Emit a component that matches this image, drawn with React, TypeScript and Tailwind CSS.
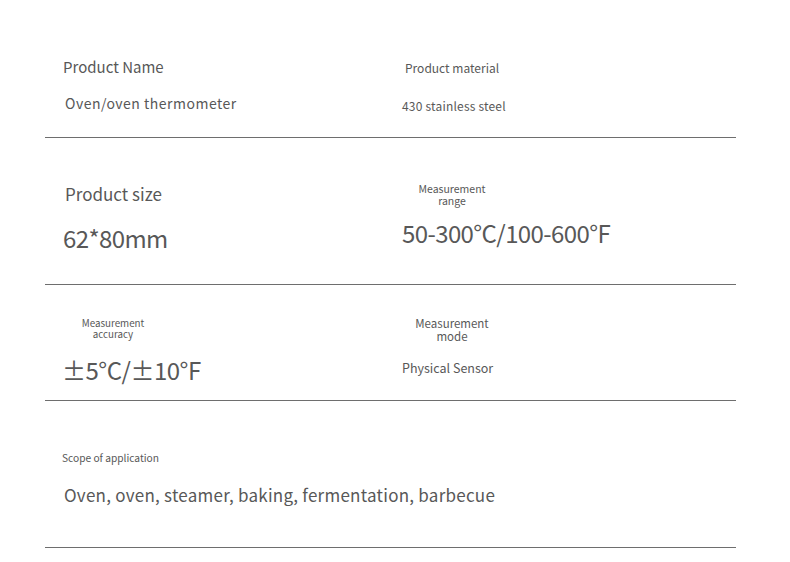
const font = { fontFamily: '"Noto Sans CJK SC", "Noto Sans", sans-serif' };

export default function App() {
  return (
    <div className="min-h-[562px] w-[790px] bg-white text-[#585858]" style={font}>
      <div className="ml-[45px] w-[691px]">
        {/* row 1 */}
        <div className="grid h-[138px] grid-cols-[357px_1fr] border-b border-[#6e6e6e]">
          <div className="pt-[57px]">
            <p className="ml-[18px] text-[15px] leading-[20px]">Product Name</p>
            <p className="ml-[20px] mt-[16px] text-[14px] leading-[20px] tracking-[0.5px]">Oven/oven thermometer</p>
          </div>
          <div className="pt-[60px]">
            <p className="ml-[3px] text-[12px] leading-[16px]">Product material</p>
            <p className="mt-[22px] text-[12px] leading-[16px] tracking-[0.2px]">430 stainless steel</p>
          </div>
        </div>

        {/* row 2 */}
        <div className="grid h-[147px] grid-cols-[357px_1fr] border-b border-[#6e6e6e]">
          <div className="pt-[44px]">
            <p className="ml-[20px] text-[17px] leading-[24px]">Product size</p>
            <p className="ml-[18px] mt-[17px] text-[24px] leading-[30px] tracking-[-0.6px]">62*80mm</p>
          </div>
          <div className="pt-[45px]">
            <p className="w-[100px] text-center text-[10.5px] leading-[12px]">
              Measurement
              <br />
              range
            </p>
            <p className="mt-[11px] text-[24px] leading-[30px] tracking-[-0.6px]">50-300°C/100-600°F</p>
          </div>
        </div>

        {/* row 3 */}
        <div className="grid h-[116px] grid-cols-[357px_1fr] border-b border-[#6e6e6e]">
          <div className="pt-[33px]">
            <p className="ml-[18px] w-[100px] text-center text-[9.8px] leading-[11px]">
              Measurement
              <br />
              accuracy
            </p>
            <p className="ml-[17px] mt-[15px] text-[24px] leading-[30px] tracking-[-0.5px]">±5°C/±10°F</p>
          </div>
          <div className="pt-[32px]">
            <p className="w-[100px] text-center text-[11.5px] leading-[13px]">
              Measurement
              <br />
              mode
            </p>
            <p className="mt-[17px] text-[12.5px] leading-[16px]">Physical Sensor</p>
          </div>
        </div>

        {/* row 4 */}
        <div className="h-[147px] border-b border-[#6e6e6e] pt-[51px]">
          <p className="ml-[17px] text-[10.2px] leading-[12px]">Scope of application</p>
          <p className="ml-[19px] mt-[19px] text-[17px] leading-[24px] tracking-[0.25px]">
            Oven, oven, steamer, baking, fermentation, barbecue
          </p>
        </div>
      </div>
    </div>
  );
}
